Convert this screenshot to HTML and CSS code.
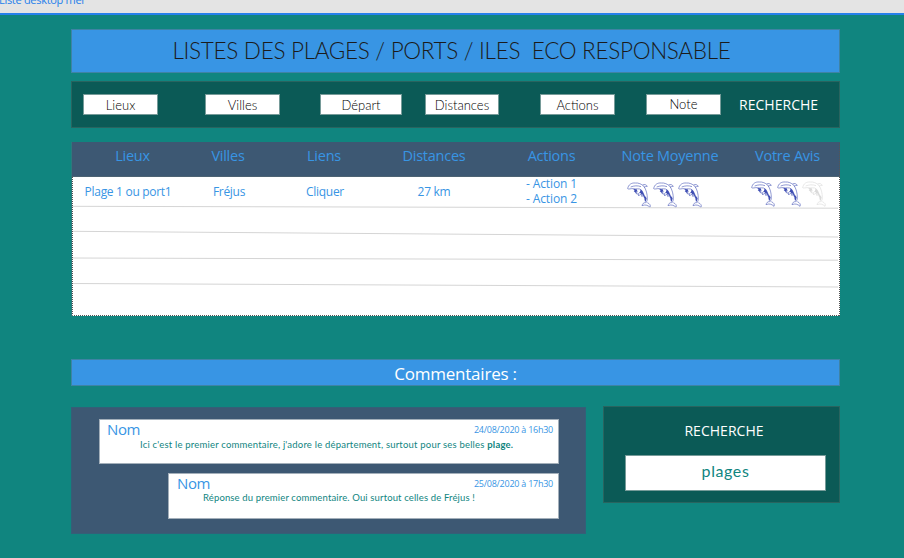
FILE: index.html
```html
<!DOCTYPE html>
<html lang="fr">
<head>
<meta charset="utf-8">
<title>Liste desktop mer</title>
<link rel="stylesheet" href="styles.css">
</head>
<body>
<svg class="defs" aria-hidden="true">
  <symbol id="dolphin" viewBox="0 0 72 78">
    <path d="M2 20C4 8 13 2 25 3C34 2 43 6 50 12C58 23 61 37 61 50C61 55 59 60 56 63"/>
    <path d="M2 20C6 23 11 19 18 20C28 22 37 18 43 24C49 31 54 44 55 59"/>
    <path d="M47 9C52 6 58 8 61 13C58 13 54 14 51 16M11 15C21 11 32 10 42 14"/>
    <path d="M56 62C50 61 46 66 45 71C54 67 62 69 69 76C72 70 68 65 61 62"/>
    <path d="M28 28L31 37L24 31M39 31L34 35L35 42L41 36L45 44L48 39"/>
    <path class="fill" d="M19 21L29 22L32 30L28 28L28 33L23 30L20 30L23 27ZM41 22L46 27L54 44L52 50L47 37L45 40L41 34L38 33ZM54 42L59 49L56 59L53 54Z"/>
  </symbol>
</svg>
<header class="topbar"><span>Liste desktop mer</span></header>
<main class="page">
  <h1 class="title"><span>LISTES DES PLAGES / PORTS / ILES&nbsp; ECO RESPONSABLE</span></h1>
  <section class="filters">
    <div class="field lieux"><span>Lieux</span></div>
    <div class="field villes"><span>Villes</span></div>
    <div class="field depart"><span>Départ</span></div>
    <div class="field distances"><span>Distances</span></div>
    <div class="field actions"><span>Actions</span></div>
    <div class="field note"><span>Note</span></div>
    <span class="search-label">RECHERCHE</span>
  </section>
  <section class="table">
    <div class="row head">
      <span class="first">Lieux</span><span>Villes</span><span>Liens</span><span>Distances</span><span>Actions</span><span>Note Moyenne</span><span class="last">Votre Avis</span>
    </div>
    <div class="row data">
      <span class="place">Plage 1 ou port1</span><span class="mid">Fréjus</span><span class="mid">Cliquer</span><span>27 km</span>
      <span class="acts">- Action 1<br>- Action 2</span>
      <span class="rating average"><svg><use href="#dolphin"/></svg><svg><use href="#dolphin"/></svg><svg><use href="#dolphin"/></svg></span>
      <span class="rating mine"><svg><use href="#dolphin"/></svg><svg><use href="#dolphin"/></svg><svg class="off"><use href="#dolphin"/></svg></span>
    </div>
    <svg class="rules" viewBox="0 0 769 175"><path d="M1 64.3L767 66.2M1 89.3L767 95M1 116L767 118.2M1 141.5L767 145"/></svg>
    <svg class="outline" viewBox="0 0 769 175"><path class="edge" d="M0.5 0V174"/><path d="M1.5 35V173.5H768M768.5 1V174"/></svg>
  </section>
  <h2 class="banner"><span>Commentaires :</span></h2>
  <div class="bottom">
    <section class="comments">
      <article class="comment">
        <div class="meta"><b class="name">Nom</b><time>24/08/2020 à 16h30</time></div>
        <p class="text-a">Ici c'est le premier commentaire, j'adore le département, surtout pour ses belles <strong>plage.</strong></p>
      </article>
      <article class="comment reply">
        <div class="meta"><b class="name">Nom</b><time>25/08/2020 à 17h30</time></div>
        <p class="text-b">Réponse du premier commentaire. Oui surtout celles de Fréjus !</p>
      </article>
    </section>
    <aside class="search">
      <span class="search-label">RECHERCHE</span>
      <div class="query"><span>plages</span></div>
    </aside>
  </div>
</main>
</body>
</html>
```
FILE: styles.css
```css
* { box-sizing: border-box; }
body { margin: 0; width: 904px; height: 558px; overflow: hidden; background: #10857f; font-family: "Open Sans", "Noto Sans", sans-serif; }
.defs { position: absolute; width: 0; height: 0; }
.topbar { height: 15px; background: #e4e4e4; border-bottom: 2px solid #2680eb; overflow: hidden; color: #2680eb; font-size: 11px; line-height: 14px; letter-spacing: -0.3px; }
.topbar span { display: block; margin-top: -7px; margin-left: -1px; }
.page { padding: 14px 64px 0 71px; }
.title, .banner { margin: 0; background: #3895e4; border: 1px solid #3e83a5; font-weight: 400; text-align: center; white-space: nowrap; }
.title { height: 44px; font: 300 22.5px/42px Lato, sans-serif; color: #1b1b1b; padding-right: 8px; letter-spacing: -0.3px; }
.filters { margin-top: 8px; height: 47px; background: #0b5a56; border: 1px solid #29645f; display: flex; padding: 12px 0 0 11px; }
.field { height: 21px; width: 75px; background: #fff; border: 1px solid #769b99; font: 300 13px/20px Lato, sans-serif; color: #000; text-align: center; white-space: nowrap; }
.villes { margin-left: 47px; }
.depart { margin-left: 40px; width: 82px; }
.distances { margin-left: 23px; width: 74px; }
.actions { margin-left: 41px; }
.note { margin-left: 31px; line-height: 18px; }
.search-label { color: #fff; font-size: 14px; line-height: 20px; letter-spacing: 0.03px; }
.filters .search-label { margin-left: 18px; line-height: 21px; }
.table { position: relative; margin-top: 14px; height: 174px; background: #fff; }
.row { display: grid; grid-template-columns: 121px 72px 120px 100px 135px 102px 119px; text-align: center; color: #3895e4; white-space: nowrap; }
.head { height: 35px; background: #3d5873; border-bottom: 1px solid #4d6373; font-size: 14.5px; line-height: 28px; letter-spacing: -0.25px; }
.first, .mid { padding-left: 2px; }
.last { padding-left: 14px; }
.data { height: 30px; font-size: 12px; line-height: 30px; letter-spacing: -0.3px; }
.place { padding-right: 7px; }
.acts { line-height: 15px; letter-spacing: -0.1px; margin-top: -1px; }
.rating { display: flex; gap: 1.5px; padding: 5px 0 0 8px; color: #3f4eb4; }
.rating svg { width: 24px; height: 26px; flex: none; fill: none; stroke: #5966bd; stroke-width: 2; }
.fill { fill: currentColor; stroke: none; }
.rating .off { stroke: #dcdcdc; color: #dadada; }
.mine { padding: 4px 0 0 30px; }
.rules, .outline { position: absolute; left: 0; top: 0; width: 769px; height: 175px; fill: none; }
.rules { stroke: #d5d5d5; stroke-width: 1; }
.outline { stroke: #555; stroke-width: 1; stroke-dasharray: 1 1; }
.outline .edge { stroke: #2c7a7d; stroke-dasharray: none; }
.banner { margin-top: 43px; height: 27px; font-size: 17px; line-height: 27px; letter-spacing: -0.22px; color: #fff; }
.bottom { margin-top: 21px; display: flex; align-items: flex-start; }
.comments { width: 515px; height: 127px; background: #3d5873; border: 1px solid #345f78; padding: 11px 0 0 27px; }
.comment { width: 460px; height: 45px; border: 1px solid #a3afba; background: #fff; }
.reply { margin: 9px 0 0 69px; width: 391px; height: 46px; }
.meta { display: flex; justify-content: space-between; color: #3895e4; line-height: 19px; height: 18px; padding: 0 5px 0 7px; }
.reply .meta { padding-left: 8px; }
.name { font-size: 15px; font-weight: 400; letter-spacing: -0.4px; }
time { font-size: 9px; letter-spacing: -0.25px; }
.comment p { margin: 0; font: 9.5px/14px Lato, sans-serif; color: #10857f; white-space: nowrap; }
.comment .text-a { padding-left: 40px; letter-spacing: 0.2px; }
.comment .text-b { padding-left: 34px; letter-spacing: 0.14px; line-height: 12px; }
.search { margin: -1px 0 0 17px; width: 237px; height: 97px; background: #0b5a56; border: 1px solid #29645f; text-align: center; padding: 14px 13px 0 21px; }
.search .search-label { display: block; margin-right: 3px; }
.query { height: 36px; margin-top: 14px; border: 1px solid #769b99; background: #fff; color: #10857f; font: 16px/30px Lato, sans-serif; letter-spacing: 0.6px; }
```
